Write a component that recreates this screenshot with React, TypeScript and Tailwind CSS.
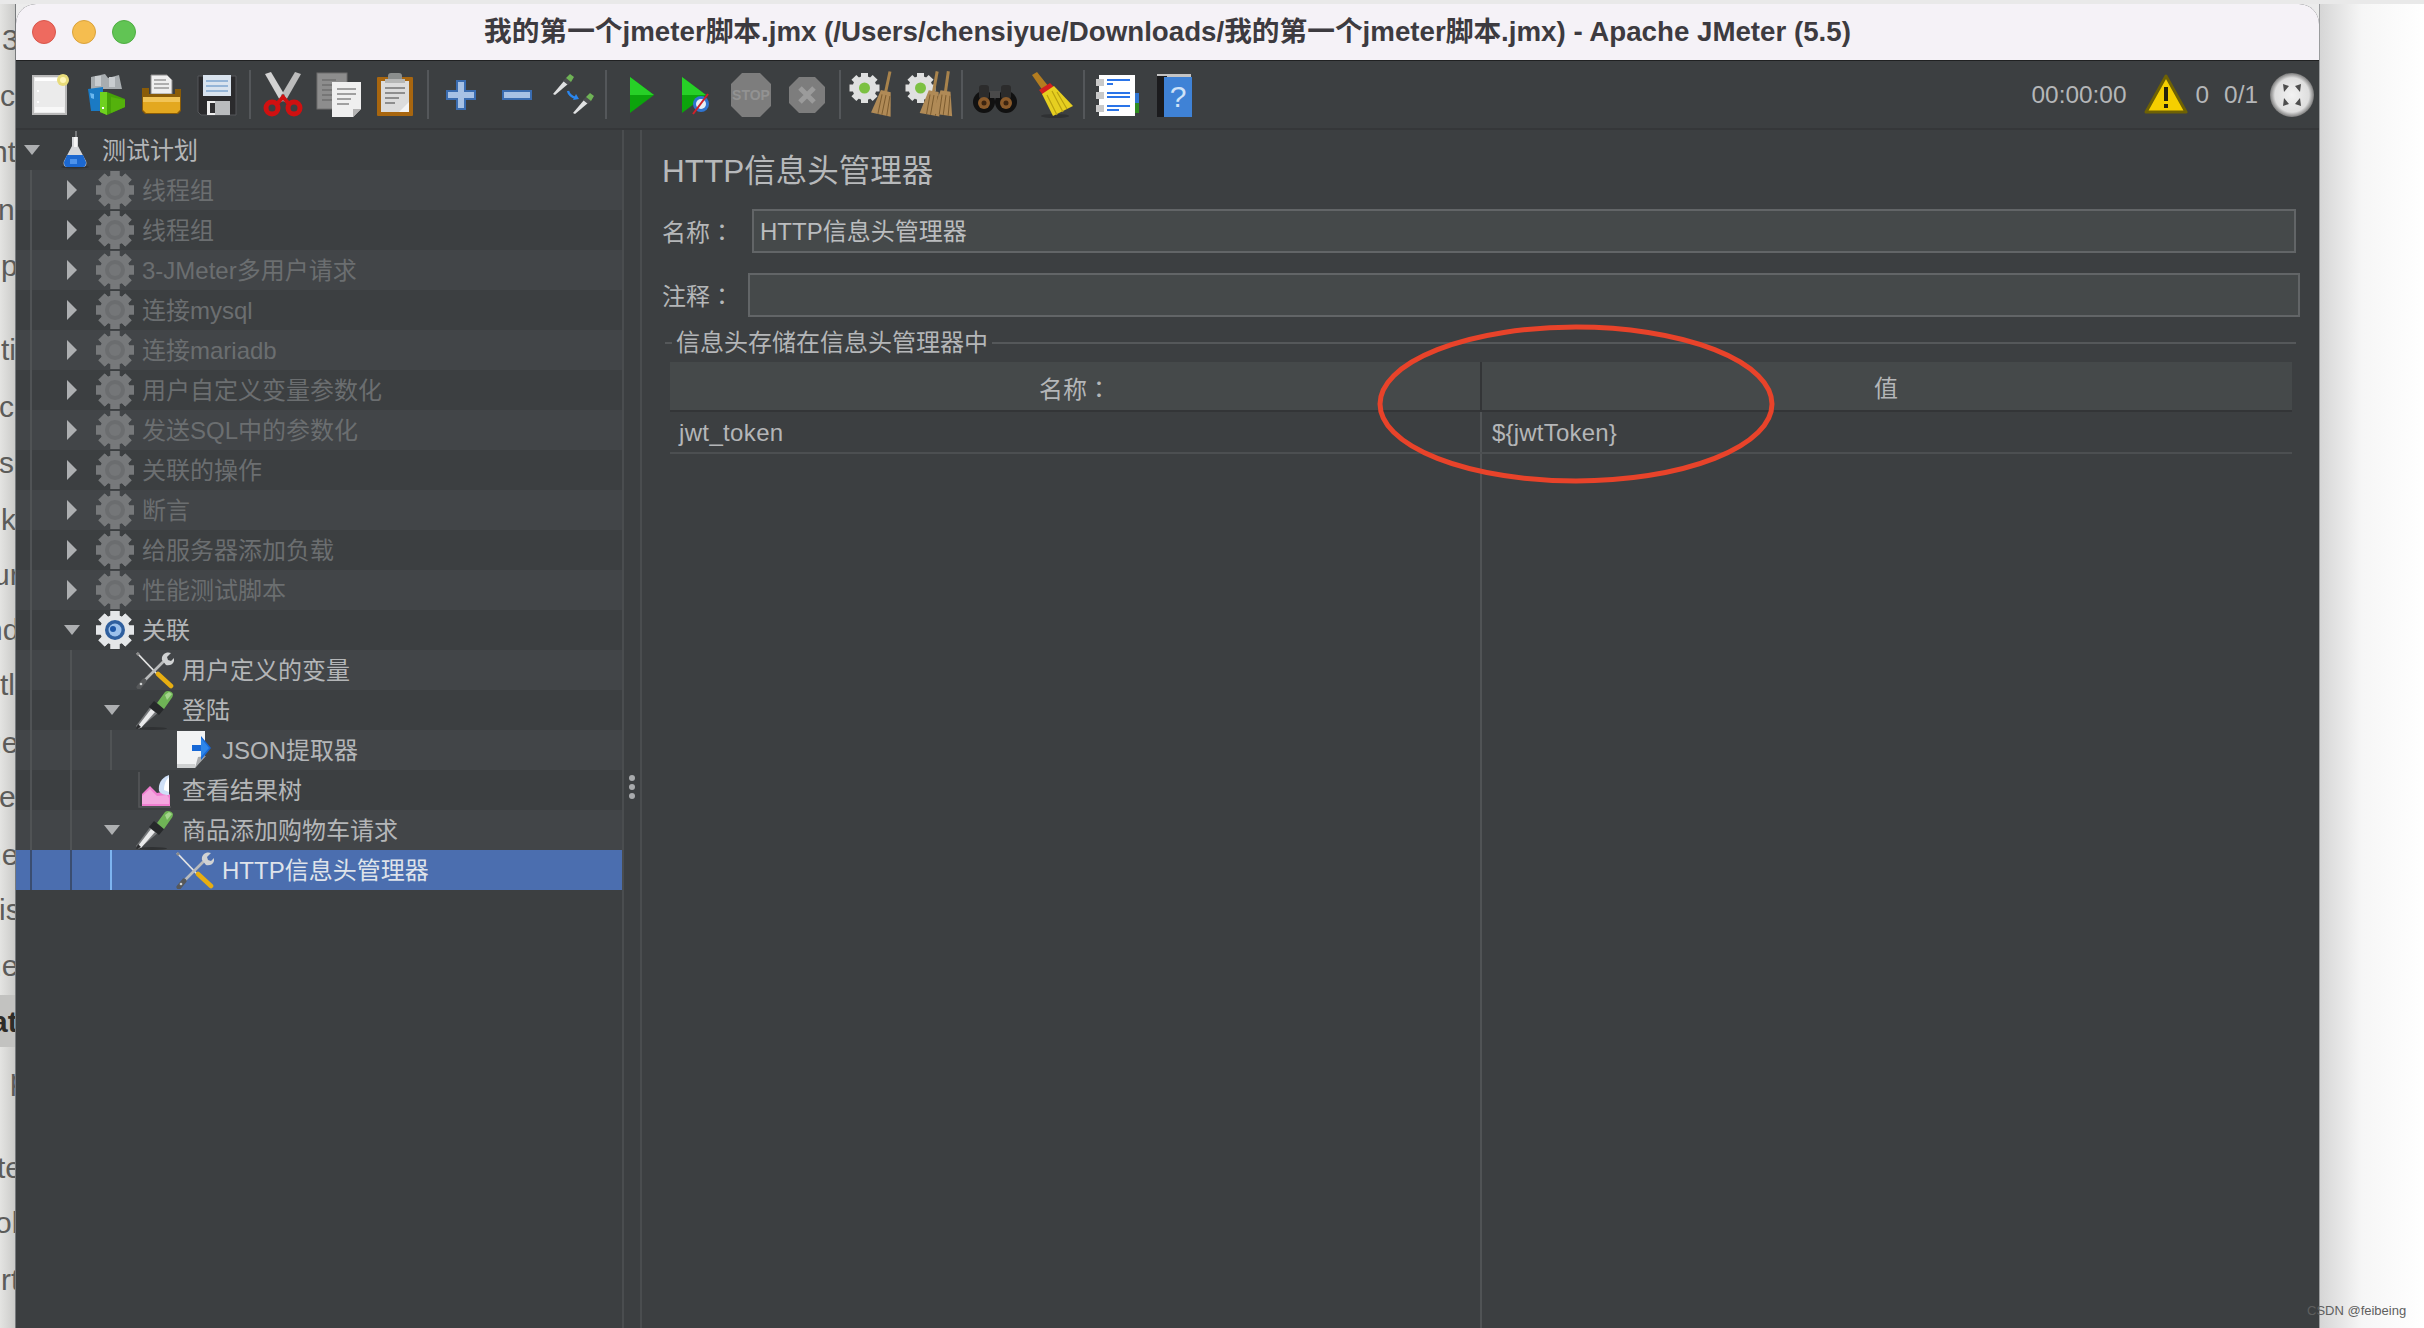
import React from 'react';

const sans = "font-['Liberation_Sans','Noto_Sans_CJK_SC',sans-serif]";

// clipped words of the page behind the window
const behind = [
  { text: '3', left: 2, top: 18, bold: false },
  { text: 'ch', left: 0, top: 74, bold: false },
  { text: 'nt', left: -9, top: 130, bold: false },
  { text: 'ng', left: -2, top: 188, bold: false },
  { text: 'p', left: 1, top: 244, bold: false },
  { text: 'ti', left: 1, top: 328, bold: false },
  { text: 'c', left: -1, top: 385, bold: false },
  { text: 'se', left: -1, top: 441, bold: false },
  { text: 'k', left: 1, top: 498, bold: false },
  { text: 'ur', left: -7, top: 553, bold: false },
  { text: 'nd', left: -14, top: 608, bold: false },
  { text: 'tl', left: 0, top: 663, bold: false },
  { text: 'ue', left: -15, top: 721, bold: false },
  { text: 'et', left: -1, top: 775, bold: false },
  { text: 'ue', left: -15, top: 833, bold: false },
  { text: 'is', left: -1, top: 888, bold: false },
  { text: 'ue', left: -15, top: 944, bold: false },
  { text: 'at', left: -9, top: 1000, bold: true },
  { text: 'p', left: 10, top: 1058, bold: false },
  { text: 'te', left: -3, top: 1146, bold: false },
  { text: 'ol', left: -5, top: 1201, bold: false },
  { text: 'rt', left: 1, top: 1258, bold: false },
];

const Gear = ({ active = false }: { active?: boolean }) => {
  const body = active ? '#e4e6e8' : '#77797b';
  const teeth = [0, 45, 90, 135, 180, 225, 270, 315];
  return (
    <svg width="40" height="40" viewBox="0 0 40 40">
      {teeth.map((a) => (
        <rect key={a} x="15.5" y="1" width="9" height="38" fill={body} transform={`rotate(${a} 20 20)`} />
      ))}
      <circle cx="20" cy="20" r="15" fill={body} />
      {active ? (
        <>
          <circle cx="20" cy="20" r="10" fill="#2f5f9e" />
          <circle cx="20" cy="20" r="6.5" fill="#9cc0ea" />
          <circle cx="18" cy="19" r="3" fill="#1d57a8" />
        </>
      ) : (
        <>
          <circle cx="20" cy="20" r="10" fill="#6b6d6f" />
          <circle cx="20" cy="20" r="6" fill="#747678" />
        </>
      )}
    </svg>
  );
};

const Flask = () => (
  <svg width="30" height="38" viewBox="0 0 30 38">
    <ellipse cx="15" cy="36" rx="14" ry="1.5" fill="#2f3133" />
    <rect x="15" y="0" width="2" height="8" fill="#77797b" />
    <path d="M12 6h6v9l8 15c1 3 0 6-3 6H7c-3 0-4-3-3-6l8-15z" fill="#d5d7da" />
    <path d="M14 6h3v10h-3z" fill="#f5f5f5" />
    <path d="M7 24h16l3 7c0 3-1 5-3 5H7c-2 0-3-2-3-5z" fill="#1c68d0" />
    <path d="M10 28h7v5h-7z" fill="#4d92ea" />
  </svg>
);

const Tools = () => (
  <svg width="38" height="38" viewBox="0 0 38 38">
    <path d="M1 2l20 21" stroke="#e3e3e3" strokeWidth="1.8" />
    <path d="M0 3l2-2 2 2-2 2z" fill="#8c8c8c" />
    <path d="M22 23l13 12" stroke="#e7ae12" strokeWidth="4.6" strokeLinecap="round" />
    <path d="M28 10L6 32" stroke="#b9bbbc" strokeWidth="2.6" />
    <path d="M8 30l-5 6" stroke="#56585a" strokeWidth="5" strokeLinecap="round" />
    <path d="M26 9c-1-5 4-9 9-7l-4 4 1 3 3 1 3-3c1 5-3 8-8 7z" fill="#d0d2d3" />
    <circle cx="5" cy="33" r="1.3" fill="#d0d2d3" />
  </svg>
);

const Dropper = () => (
  <svg width="38" height="40" viewBox="0 0 38 40">
    <ellipse cx="16" cy="38.5" rx="15" ry="1.4" fill="#2f3133" />
    <path d="M0 36l15-20 8 6L3 39z" fill="#77797b" />
    <path d="M2 36l13-17 4 3L5 38z" fill="#e9eaeb" />
    <path d="M0 39l2-5 3 3z" fill="#2b2c2e" />
    <path d="M13 17l5-6 10 8-5 6z" fill="#26282a" />
    <path d="M21 13l8-11c2-2 7-1 8 2 0 2-1 4-2 5l-7 10z" fill="#6fb356" />
    <path d="M29 5l4-3 3 2-5 6z" fill="#a4d58d" />
  </svg>
);

const JsonDoc = () => (
  <svg width="40" height="40" viewBox="0 0 40 40">
    <path d="M2 1h28v24l-10 13H2z" fill="#f2f3f4" />
    <path d="M20 38l3-11 8-1z" fill="#a9abad" />
    <path d="M2 34h18v4H2z" fill="#cfd1d2" />
    <path d="M17 15h9V6l10 12-10 12v-9h-9z" fill="#1768d6" />
    <path d="M26 8l8 10-8 9z" fill="#2e86ea" />
  </svg>
);

const ResultChart = () => (
  <svg width="36" height="38" viewBox="0 0 36 38">
    <path d="M2 1v35h32" stroke="#56585a" strokeWidth="1.5" fill="none" />
    <path d="M5 35V23l8-8 7 7 10-2 3 4v11z" fill="#f07ed0" />
    <path d="M5 33V25l8-7 7 7 10-1 2 3v6z" fill="#f4a7df" />
    <path d="M22 20c-1-7 2-13 10-16v20c-5 0-8-1-10-4z" fill="#cfe0f7" />
    <path d="M27 19c0-6 2-10 5-13v15z" fill="#ffffff" />
  </svg>
);

type TreeRow = {
  label: string;
  level: number;
  arrow?: 'right' | 'down';
  icon: React.ReactNode;
  dim?: boolean;
  selected?: boolean;
};

const dimGroups = [
  '线程组',
  '线程组',
  '3-JMeter多用户请求',
  '连接mysql',
  '连接mariadb',
  '用户自定义变量参数化',
  '发送SQL中的参数化',
  '关联的操作',
  '断言',
  '给服务器添加负载',
  '性能测试脚本',
];

const rows: TreeRow[] = [
  { label: '测试计划', level: 0, arrow: 'down', icon: <Flask /> },
  ...dimGroups.map((label): TreeRow => ({ label, level: 1, arrow: 'right', icon: <Gear />, dim: true })),
  { label: '关联', level: 1, arrow: 'down', icon: <Gear active /> },
  { label: '用户定义的变量', level: 2, icon: <Tools /> },
  { label: '登陆', level: 2, arrow: 'down', icon: <Dropper /> },
  { label: 'JSON提取器', level: 3, icon: <JsonDoc /> },
  { label: '查看结果树', level: 2, icon: <ResultChart /> },
  { label: '商品添加购物车请求', level: 2, arrow: 'down', icon: <Dropper /> },
  { label: 'HTTP信息头管理器', level: 3, icon: <Tools />, selected: true },
];

const Arrow = ({ dir }: { dir: 'right' | 'down' }) =>
  dir === 'right' ? (
    <svg width="10" height="20" viewBox="0 0 10 20">
      <path d="M0 0l10 10L0 20z" fill="#adafb1" />
    </svg>
  ) : (
    <svg width="16" height="10" viewBox="0 0 16 10">
      <path d="M0 0h16L8 10z" fill="#adafb1" />
    </svg>
  );

const Row = ({ row, index }: { row: TreeRow; index: number }) => {
  const indents = Array.from({ length: row.level }, (_, i) => i);
  const rowBg = row.selected ? 'bg-[#4b6eaf]' : index % 2 === 1 ? 'bg-[#424548]' : 'bg-[#3c3f41]';
  const textColor = row.selected ? 'text-[#dfe3ea]' : row.dim ? 'text-[#6b6e70]' : 'text-[#b4b6b8]';
  return (
    <div className={`flex h-[40px] items-stretch ${rowBg}`}>
      {indents.map((i) => (
        <div key={i} className="flex w-[40px] shrink-0 pl-[14px]">
          <div
            className={`w-[2px] ${
              row.selected ? (i === 2 ? 'bg-[#7db4f0]' : 'bg-[#3a4d70]') : 'bg-[#505355]'
            }`}
          />
        </div>
      ))}
      <div className="flex w-[32px] shrink-0 items-center justify-center">{row.arrow && <Arrow dir={row.arrow} />}</div>
      <div className="flex w-[54px] shrink-0 items-center justify-center">{row.icon}</div>
      <div className={`flex items-center pt-[2px] text-[24px] leading-none whitespace-nowrap ${textColor}`}>{row.label}</div>
    </div>
  );
};

// the reference draws the full-width colon centred, as the TC face does
const Colon = () => <span className="font-['Noto_Sans_CJK_TC',sans-serif]">：</span>;

/* toolbar icons */
const IconBox = ({ children }: { children: React.ReactNode }) => (
  <div className="flex h-full w-[56px] shrink-0 items-center justify-center">
    <svg width="48" height="48" viewBox="0 0 48 48">
      {children}
    </svg>
  </div>
);

const ToolSep = () => <div className="mx-[4px] my-[9px] w-[2px] shrink-0 bg-[#54575a]" />;

const BroomHead = ({ x, rot }: { x: number; rot: number }) => (
  <g transform={`rotate(${rot} ${x} 24)`}>
    <rect x={x - 1.5} y="0" width="3" height="22" fill="#a8834c" />
    <path d={`M${x - 5} 20h10l5 24H${x - 10}z`} fill="#b08a56" />
    <path d={`M${x - 3} 24v20M${x + 1} 24v20M${x + 5} 24l1 20`} stroke="#7c5c30" strokeWidth="1" />
  </g>
);

const SmallGear = () => (
  <g>
    {[0, 45, 90, 135].map((a) => (
      <rect key={a} x="12" y="2" width="7" height="30" fill="#dfe0e0" transform={`rotate(${a} 15.5 17)`} />
    ))}
    <circle cx="15.5" cy="17" r="12" fill="#dfe0e0" />
    <circle cx="15.5" cy="17" r="5.5" fill="#7cc142" />
  </g>
);

const MiniDropper = ({ x, y }: { x: number; y: number }) => (
  <g transform={`translate(${x} ${y})`}>
    <path d="M0 20l11-13 4 3L2 21z" fill="#e0e1e2" />
    <path d="M10 7l3-3 5 4-3 3z" fill="#4c4e50" />
    <path d="M13 4l4-4 4 3-3 5z" fill="#6fb356" />
  </g>
);

const toolbarGroups: React.ReactNode[][] = [
  [
    <>
      <rect x="8" y="5" width="33" height="38" fill="#ebebeb" stroke="#b9b9b9" strokeWidth="2" />
      <rect x="10" y="7" width="29" height="3" fill="#ffffff" />
      <rect x="10" y="36" width="29" height="5" fill="#f8f8f8" />
      <circle cx="38" cy="9" r="6" fill="#e8dc7a" />
      <circle cx="38" cy="9" r="3" fill="#fff6b8" />
      <rect x="12" y="19" width="2" height="2" fill="#ffffff" />
      <rect x="12" y="30" width="2" height="2" fill="#ffffff" />
    </>,
    <>
      <path d="M10 6l14-3 3 4 11-3 3 14H10z" fill="#a8adb0" />
      <path d="M14 5h6v10h-6zM28 6h6v10h-6z" fill="#c9cdd0" />
      <path d="M7 18l15-2v24l-12 0z" fill="#1a7ac4" />
      <path d="M9 22l4 1v5l-3-1z" fill="#6ab7ef" />
      <path d="M19 21h7l18 7v8L26 44l-7-3z" fill="#46a208" />
      <path d="M19 21h7v23l-7-3z" fill="#6fd11f" />
      <rect x="21" y="36" width="2" height="2" fill="#ffffff" />
      <path d="M30 26l14 3v7l-14 6z" fill="#54b20c" />
    </>,
    <>
      <path d="M14 4h16l5 5v14H14z" fill="#efefef" stroke="#8c8c8c" strokeWidth="1" />
      <path d="M17 9h12M17 13h15M17 17h15" stroke="#9a9a9a" strokeWidth="1.6" />
      <path d="M5 17h7v6h26v-5h6v22l-3 3H8l-3-3z" fill="#8a5c08" />
      <path d="M6 26h37l0 13-3 3H9l-3-3z" fill="#e3a81f" />
      <path d="M6 26h37v5H6z" fill="#f1c456" />
    </>,
    <>
      <path d="M5 5h38v39H8l-3-3z" fill="#2b2b2d" stroke="#55575a" strokeWidth="1" />
      <rect x="10" y="4" width="28" height="21" fill="#d9e3ee" />
      <path d="M13 10h22M13 15h22M13 20h22" stroke="#7fa6cf" strokeWidth="1.6" />
      <rect x="14" y="30" width="23" height="14" fill="#b9bbbd" />
      <rect x="14" y="30" width="8" height="14" fill="#efefef" />
      <rect x="17" y="32" width="5" height="10" fill="#2f2f31" />
    </>,
  ],
  [
    <>
      <path d="M6 3l6-2 16 27-6 3z" fill="#d3d3d3" />
      <path d="M42 3l-6-2-16 27 6 3z" fill="#bcbcbc" />
      <circle cx="24" cy="25" r="2" fill="#777" />
      <circle cx="13" cy="37" r="6" fill="none" stroke="#d01010" strokeWidth="5" />
      <circle cx="35" cy="37" r="6" fill="none" stroke="#d01010" strokeWidth="5" />
      <path d="M18 33l6-7 6 7" stroke="#d01010" strokeWidth="4" fill="none" />
    </>,
    <>
      <rect x="2" y="2" width="30" height="36" fill="#8d8d8d" stroke="#6e6e6e" />
      <path d="M7 9h14M7 14h14M7 19h14M7 24h14M7 29h14" stroke="#6f6f6f" strokeWidth="1.6" />
      <path d="M17 11h29v27l-8 8H17z" fill="#efefef" />
      <path d="M38 46v-8h8z" fill="#b2b2b2" />
      <path d="M22 18h19M22 23h19M22 28h14M22 33h12" stroke="#a0a0a0" strokeWidth="1.8" />
    </>,
    <>
      <rect x="6" y="6" width="36" height="39" rx="1" fill="#a8660f" />
      <rect x="10" y="10" width="28" height="31" fill="#dcdcdc" />
      <rect x="17" y="2" width="14" height="9" rx="3" fill="#8b8e8d" />
      <rect x="14" y="8" width="20" height="4" fill="#b6b7b6" />
      <path d="M14 17h20M14 22h20M14 27h14M14 32h10" stroke="#8e8e8e" strokeWidth="1.8" />
      <path d="M28 41l10-10v10z" fill="#f4f4f4" />
    </>,
  ],
  [
    <>
      <path d="M20 10h8v10h10v8H28v10h-8V28H10v-8h10z" fill="#a7c1e4" stroke="#3a6cb0" strokeWidth="2" />
    </>,
    <>
      <rect x="10" y="20" width="28" height="8" fill="#a7c1e4" stroke="#3a6cb0" strokeWidth="2" />
    </>,
    <>
      <MiniDropper x={4} y={3} />
      <MiniDropper x={24} y={22} />
      <path d="M19 20c1 4 4 6 8 7" stroke="#2a86ee" strokeWidth="2.4" fill="none" />
      <path d="M24 29l6-1-3-5z" fill="#2a86ee" />
    </>,
  ],
  [
    <>
      <path d="M15 6l24 18-24 18z" fill="#0ca40c" />
      <path d="M15 6l24 18H15z" fill="#27d027" />
    </>,
    <>
      <path d="M11 6l24 18-24 18z" fill="#0ca40c" />
      <path d="M11 6l24 18H11z" fill="#27d027" />
      <circle cx="30" cy="33" r="8" fill="#2f74d0" />
      <circle cx="30" cy="33" r="5" fill="#e8eef6" />
      <path d="M22 43l15-20" stroke="#d01f2a" strokeWidth="2" />
    </>,
    <>
      <path d="M15 2h18l11 11v22L33 46H15L4 35V13z" fill="#7d7d7d" />
      <text x="24" y="29" fontSize="14" fontWeight="700" textAnchor="middle" fill="#929292" fontFamily="Liberation Sans">
        STOP
      </text>
    </>,
    <>
      <path d="M16 6h16l10 10v16L32 42H16L6 32V16z" fill="#7d7d7d" />
      <path d="M17 17l14 14M31 17L17 31" stroke="#9b9b9b" strokeWidth="5" />
    </>,
  ],
  [
    <>
      <SmallGear />
      <BroomHead x={36} rot={12} />
    </>,
    <>
      <SmallGear />
      <BroomHead x={28} rot={10} />
      <BroomHead x={40} rot={8} />
    </>,
  ],
  [
    <>
      <circle cx="13" cy="31" r="11" fill="#111" />
      <circle cx="35" cy="31" r="11" fill="#111" />
      <rect x="8" y="14" width="10" height="14" rx="3" fill="#2c2c2c" />
      <rect x="30" y="14" width="10" height="14" rx="3" fill="#2c2c2c" />
      <rect x="19" y="20" width="10" height="7" fill="#4a4a4a" />
      <circle cx="13" cy="32" r="6" fill="#8a5a2a" />
      <circle cx="35" cy="32" r="6" fill="#8a5a2a" />
      <circle cx="13" cy="32" r="2.5" fill="#3b2410" />
      <circle cx="35" cy="32" r="2.5" fill="#3b2410" />
    </>,
    <>
      <ellipse cx="28" cy="45" rx="14" ry="2" fill="#2f3133" />
      <path d="M5 4l5-3 12 15-6 4z" fill="#b37d20" />
      <path d="M12 19l11-7 4 4-11 8z" fill="#d21f1f" />
      <path d="M15 23l12-8 19 20-20 10z" fill="#e6cf20" />
      <path d="M20 24l10 20M25 20l11 21M30 21l10 17" stroke="#b9a010" strokeWidth="1.2" />
    </>,
  ],
  [
    <>
      <rect x="41" y="22" width="5" height="10" fill="#2f74d0" />
      <rect x="41" y="32" width="5" height="10" fill="#2e8b1f" />
      <rect x="6" y="4" width="36" height="41" fill="#ffffff" />
      <rect x="3" y="8" width="8" height="7" fill="#c9c9c9" />
      <rect x="3" y="21" width="8" height="7" fill="#c9c9c9" />
      <rect x="3" y="34" width="8" height="7" fill="#c9c9c9" />
      <path d="M14 9h23M14 13h6M14 22h23M14 26h23M14 35h23M14 39h12" stroke="#2a74e8" strokeWidth="2" />
    </>,
    <>
      <rect x="8" y="3" width="34" height="3" fill="#c4c4c4" />
      <rect x="8" y="5" width="10" height="41" fill="#1b1b1d" />
      <rect x="15" y="6" width="28" height="40" fill="#3f82d6" />
      <text x="29" y="36" fontSize="30" textAnchor="middle" fill="#cfe2f8" fontFamily="Liberation Sans">
        ?
      </text>
    </>,
  ],
];

const Warning = () => (
  <svg width="44" height="42" viewBox="0 0 44 42">
    <path d="M22 2l20 36H2z" fill="#f5cf00" stroke="#6e6104" strokeWidth="3" strokeLinejoin="round" />
    <rect x="20" y="13" width="4" height="14" fill="#26230c" />
    <rect x="20" y="30" width="4" height="4" fill="#26230c" />
  </svg>
);

const Globe = () => (
  <svg width="44" height="44" viewBox="0 0 44 44">
    <defs>
      <radialGradient id="globe" cx="50%" cy="50%" r="50%">
        <stop offset="0%" stopColor="#f2f2f2" />
        <stop offset="78%" stopColor="#dedede" />
        <stop offset="100%" stopColor="#7c7c7c" />
      </radialGradient>
    </defs>
    <circle cx="22" cy="22" r="22" fill="url(#globe)" />
    <path d="M13 11l6 2-5 6zM31 11l-6 2 5 6zM13 33l6-2-5-6zM31 33l-6-2 5-6z" fill="#4d4d4d" />
  </svg>
);

export default function App() {
  return (
    <div className={`relative flex h-[1328px] w-[2424px] flex-col overflow-hidden bg-[#ececec] ${sans}`}>
      <div className="h-[4px] shrink-0 overflow-hidden bg-[#e9e9e9]">
        <div className="mt-[-25px] whitespace-nowrap text-[28px] leading-[30px] font-bold text-[#333333]">s Notion</div>
      </div>
      <div className="flex min-h-0 flex-1">
        <div className="relative w-[16px] shrink-0 overflow-hidden border-r border-[#777a7c] bg-gradient-to-r from-[#e4e4e2] to-[#cbcbc9]">
          <div className="absolute top-[991px] h-[52px] w-full bg-[#c2c2c0]" />
          {behind.map((b) => (
            <div
              key={b.top}
              className={`absolute text-[30px] leading-[36px] whitespace-nowrap ${
                b.bold ? 'font-bold text-[#2e2c28]' : 'text-[#5c5c5a]'
              }`}
              style={{ top: b.top, left: b.left }}
            >
              {b.text}
            </div>
          ))}
        </div>

        <div className="flex w-[2303px] shrink-0 flex-col overflow-hidden rounded-t-[20px] bg-[#3c3f41]">
          <div className="relative flex h-[56px] shrink-0 items-center justify-center bg-[#f5f2f7]">
            <div className="absolute left-[16px] top-[16px] flex gap-[16px]">
              <div className="h-[24px] w-[24px] rounded-full border border-[#d8564b] bg-[#ee6a5f]" />
              <div className="h-[24px] w-[24px] rounded-full border border-[#d9a23c] bg-[#f5bd4f]" />
              <div className="h-[24px] w-[24px] rounded-full border border-[#4fad43] bg-[#61c454]" />
            </div>
            <div className="text-[27.7px] font-bold whitespace-nowrap text-[#3d3b40]">
              我的第一个jmeter脚本.jmx (/Users/chensiyue/Downloads/我的第一个jmeter脚本.jmx) - Apache JMeter (5.5)
            </div>
          </div>

          <div className="flex h-[70px] shrink-0 border-t border-[#202122] border-b-2 border-b-[#353739] bg-[#3c3f41] pl-[5px]">
            {toolbarGroups.map((group, g) => (
              <React.Fragment key={g}>
                {g > 0 && <ToolSep />}
                {group.map((icon, i) => (
                  <IconBox key={i}>{icon}</IconBox>
                ))}
              </React.Fragment>
            ))}
            <div className="ml-auto flex items-center pr-[5px] text-[24.4px] text-[#b4b6b8]">
              <span className="pt-[2px]">00:00:00</span>
              <div className="ml-[16px] flex w-[46px] justify-center">
                <Warning />
              </div>
              <span className="ml-[7px] pt-[2px]">0</span>
              <span className="ml-[15px] pt-[2px]">0/1</span>
              <div className="ml-[12px]">
                <Globe />
              </div>
            </div>
          </div>

          <div className="relative flex min-h-0 flex-1">
            <div className="w-[606px] shrink-0">
              {rows.map((row, i) => (
                <Row key={i} row={row} index={i} />
              ))}
            </div>

            <div className="flex w-[20px] shrink-0 items-center justify-center border-x-2 border-[#4a4d4f]">
              <div className="mt-[116px] flex flex-col gap-[3px]">
                <div className="h-[6px] w-[6px] rounded-full bg-[#a9abad]" />
                <div className="h-[6px] w-[6px] rounded-full bg-[#a9abad]" />
                <div className="h-[6px] w-[6px] rounded-full bg-[#a9abad]" />
              </div>
            </div>

            <div className="relative flex min-w-0 flex-1 flex-col pl-[20px] pr-[23px] text-[#b4b6b8]">
              <div className="mt-[21px] h-[39px] text-[31.5px] leading-[40px] whitespace-nowrap text-[#b7b9bb]">
                HTTP信息头管理器
              </div>

              <div className="mt-[19px] flex h-[44px] items-center text-[24px]">
                <div className="w-[90px] shrink-0 pt-[2px]">
                  名称
                  <Colon />
                </div>
                <div className="flex h-full flex-1 items-center border-2 border-[#626567] bg-[#45494a] pl-[6px] pt-[1px] text-[#bbbdbf]">
                  HTTP信息头管理器
                </div>
              </div>

              <div className="mt-[20px] mr-[-4px] flex h-[44px] items-center text-[24px]">
                <div className="w-[86px] shrink-0 pt-[1px]">
                  注释
                  <Colon />
                </div>
                <div className="h-full flex-1 border-2 border-[#626567] bg-[#45494a]" />
              </div>

              <div className="mt-[12px] flex h-[28px] items-center text-[24px]">
                <div className="ml-[3px] h-[2px] w-[7px] bg-[#55585a]" />
                <div className="mx-[4px] whitespace-nowrap">信息头存储在信息头管理器中</div>
                <div className="h-[2px] flex-1 bg-[#55585a]" />
              </div>

              <div className="mt-[5px] ml-[8px] mr-[4px] flex min-h-0 flex-1 flex-col text-[24px]">
                <div className="flex h-[50px] shrink-0 border-b-2 border-[#333537] bg-[#45494a]">
                  <div className="flex w-[812px] items-center justify-center border-r-2 border-[#333537] pt-[5px]">
                    <span>
                      名称
                      <Colon />
                    </span>
                  </div>
                  <div className="flex flex-1 items-center justify-center pt-[5px] pr-[2px]">值</div>
                </div>
                <div className="flex h-[42px] shrink-0 border-b-2 border-[#4c4f51]">
                  <div className="flex w-[812px] items-center border-r-2 border-[#505355] pl-[9px] pt-[2px] tracking-[0.35px]">
                    jwt_token
                  </div>
                  <div className="flex flex-1 items-center pl-[10px] pt-[2px] tracking-[0.2px]">{'${jwtToken}'}</div>
                </div>
                <div className="flex flex-1">
                  <div className="w-[812px] border-r-2 border-[#505355]" />
                </div>
              </div>

              <svg className="absolute left-[734px] top-[193px]" width="400" height="162" viewBox="0 0 400 162">
                <ellipse cx="200" cy="81" rx="196" ry="77" fill="none" stroke="#e8432a" strokeWidth="5" />
              </svg>
            </div>
          </div>
        </div>

        <div className="flex-1 border-l border-[#9a9c9e] bg-gradient-to-r from-[#d6d6d6] via-[#f6f6f6] via-40% to-white" />
      </div>

      <div className="absolute left-[2307px] top-[1302px] text-[13px] leading-[18px] whitespace-nowrap text-[#5f5f5f]">
        CSDN @feibeing
      </div>
    </div>
  );
}
